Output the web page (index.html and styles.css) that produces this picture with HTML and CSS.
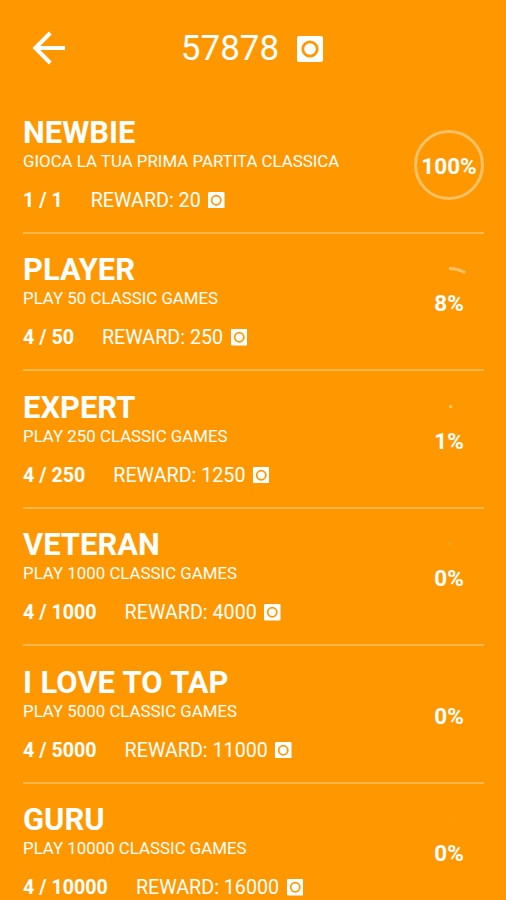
FILE: index.html
```html
<!DOCTYPE html>
<html lang="it">
<head>
  <meta charset="UTF-8">
  <title>Achievements</title>
  <link rel="stylesheet" href="styles.css">
</head>
<body>

  <header>
    <svg id="back" viewBox="0 0 34 34">
      <path d="M33 17H3M18.3 2L3.3 17l15 15"/>
    </svg>
    <div id="coins">57878 <svg class="coin" viewBox="0 0 26 26"><rect width="26" height="26" rx="2"/><circle cx="13" cy="13" r="7.2"/></svg></div>
  </header>

  <main id="list"></main>

  <script>
    const list = document.getElementById("list");

    const achievements = [
      { title: "NEWBIE", text: "GIOCA LA TUA PRIMA PARTITA CLASSICA", done: 1, goal: 1, reward: 20 },
      { title: "PLAYER", text: "PLAY 50 CLASSIC GAMES", done: 4, goal: 50, reward: 250 },
      { title: "EXPERT", text: "PLAY 250 CLASSIC GAMES", done: 4, goal: 250, reward: 1250 },
      { title: "VETERAN", text: "PLAY 1000 CLASSIC GAMES", done: 4, goal: 1000, reward: 4000 },
      { title: "I LOVE TO TAP", text: "PLAY 5000 CLASSIC GAMES", done: 4, goal: 5000, reward: 11000 },
      { title: "GURU", text: "PLAY 10000 CLASSIC GAMES", done: 4, goal: 10000, reward: 16000 }
    ];

    const coin = document.querySelector(".coin").outerHTML;

    achievements.forEach(a => {
      const percent = a.done / a.goal * 100;
      const row = document.createElement("section");
      row.classList.add("row");
      row.innerHTML = `
        <div class="info">
          <h2>${a.title}</h2>
          <p>${a.text}</p>
          <div class="stats"><b>${a.done} / ${a.goal}</b><span>REWARD: ${a.reward}</span>${coin}</div>
        </div>
        <div class="progress">
          <svg viewBox="0 0 70 70">
            <circle cx="35" cy="35" r="33.5" pathLength="100" stroke-dasharray="${percent} 100"/>
          </svg>
          <b>${Math.floor(percent)}%</b>
        </div>`;
      list.appendChild(row);
    });
  </script>
</body>
</html>
```

FILE: styles.css
```css
body {
  margin: 0;
  height: 900px;
  overflow: hidden;
  background-color: #ff9800;
  color: #fff;
  font-family: Roboto, sans-serif;
}
header {
  display: grid;
  grid-template-columns: 89px 1fr 91px;
  align-items: center;
  height: 96px;
}
#back {
  width: 34px;
  height: 34px;
  margin-left: 31.5px;
  fill: none;
  stroke: #fff;
  stroke-width: 4;
}
#coins {
  display: flex;
  justify-content: center;
  align-items: center;
  gap: 18px;
  padding-top: 1px;
  font-size: 35px;
  line-height: 42px;
}
.coin {
  width: 16.5px;
  height: 16.5px;
  fill: #fff;
}
.coin circle {
  stroke: #ff9800;
  stroke-width: 2.8;
}
#coins .coin {
  width: 26px;
  height: 26px;
}
#list {
  padding: 0 22px 0 23px;
}
.row {
  display: flex;
  justify-content: space-between;
  box-sizing: border-box;
  height: 137.5px;
  padding-top: 18.8px;
  border-bottom: 2px solid #ffb74d;
}
h2 {
  margin: 0;
  font-size: 30.9px;
  font-weight: bold;
  line-height: 36px;
  word-spacing: 0.8px;
}
p {
  margin: 0 0 18px;
  font-size: 16.85px;
  line-height: 20px;
}
.stats {
  display: flex;
  align-items: center;
  font-size: 19.7px;
  line-height: 24px;
}
.stats span {
  margin: 0 7.5px 0 28px;
}
.stats .coin {
  margin-bottom: 1.5px;
}
.progress {
  display: grid;
  place-items: center;
  width: 70px;
  height: 70px;
  margin-top: 15px;
  font-size: 22.5px;
}
.progress svg, .progress b {
  grid-area: 1 / 1;
}
.progress b {
  padding-top: 1.6px;
}
.progress svg {
  width: 70px;
  height: 70px;
  transform: rotate(-90deg); /* start from the top */
}
.progress circle {
  fill: none;
  stroke: #ffc166;
  stroke-width: 3;
}
```
